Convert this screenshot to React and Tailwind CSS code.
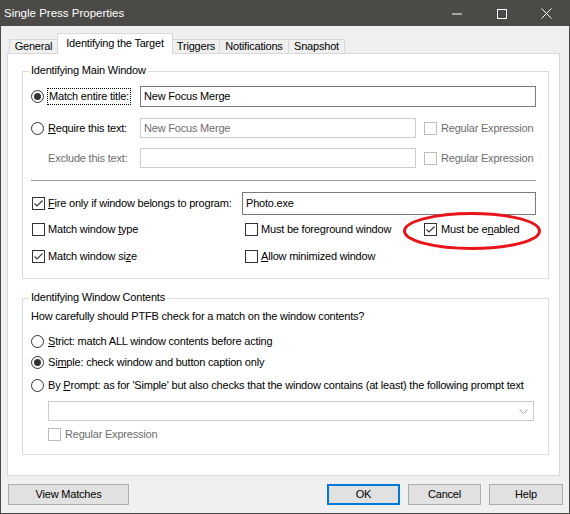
import React from "react";

function Radio({ checked }) {
  return (
    <svg width="13" height="13" viewBox="0 0 13 13" className="shrink-0">
      <circle cx="6.5" cy="6.5" r="6" fill="#fff" stroke="#333333" strokeWidth="1" />
      {checked && <circle cx="6.5" cy="6.5" r="3.5" fill="#333333" />}
    </svg>
  );
}

function Check({ checked, disabled }) {
  const c = disabled ? "#bcbcbc" : "#333333";
  return (
    <svg width="13" height="13" viewBox="0 0 13 13" className="shrink-0">
      <rect x="0.5" y="0.5" width="12" height="12" fill="#fff" stroke={c} strokeWidth="1" />
      {checked && (
        <polyline points="2.5,6.5 5,9 10.5,3.5" fill="none" stroke="#333333" strokeWidth="1.1" />
      )}
    </svg>
  );
}

function Btn({ children, w, primary }) {
  return (
    <div
      className={
        "h-[21px] flex items-center justify-center bg-[#e1e1e1] " +
        (primary ? "border-2 border-[#0078d7] " : "border border-[#adadad] ") +
        w
      }
    >
      {children}
    </div>
  );
}

export default function App() {
  return (
    <div className="relative w-[570px] h-[514px] bg-[#f0f0f0] border border-[#4b4a47] font-['Liberation_Sans',Arial,sans-serif] text-[11px] tracking-[-0.2px] text-black flex flex-col leading-none">
      {/* title bar */}
      <div className="h-[25px] bg-[#4b4a47] flex items-center text-white shrink-0">
        <div className="pl-[3px] text-[11.5px] tracking-normal">Single Press Properties</div>
        <div className="ml-auto flex h-full">
          <div className="w-[45px] h-full flex items-center justify-center">
            <svg width="10" height="10" viewBox="0 0 10 10">
              <line x1="0" y1="5" x2="10" y2="5" stroke="#fff" strokeWidth="1" />
            </svg>
          </div>
          <div className="w-[45px] h-full flex items-center justify-center">
            <svg width="10" height="10" viewBox="0 0 10 10">
              <rect x="0.5" y="0.5" width="9" height="9" fill="none" stroke="#fff" strokeWidth="1" />
            </svg>
          </div>
          <div className="w-[45px] h-full flex items-center justify-center">
            <svg width="11" height="11" viewBox="0 0 11 11">
              <line x1="0.5" y1="0.5" x2="10.5" y2="10.5" stroke="#fff" strokeWidth="1" />
              <line x1="10.5" y1="0.5" x2="0.5" y2="10.5" stroke="#fff" strokeWidth="1" />
            </svg>
          </div>
        </div>
      </div>

      {/* tabs */}
      <div className="mt-[7px] h-[20px] pl-[8px] flex items-end shrink-0">
        <div className="w-[48px] h-[14px] border-l border-t border-[#d9d9d9] flex items-center justify-center">General</div>
        <div className="relative z-10 w-[116px] h-[21px] -mb-px bg-white border-l border-t border-r border-[#d9d9d9] flex items-center justify-center pb-[1px]">
          Identifying the Target
        </div>
        <div className="w-[47px] h-[14px] border-t border-r border-[#d9d9d9] flex items-center justify-center">Triggers</div>
        <div className="w-[69px] h-[14px] border-t border-r border-[#d9d9d9] flex items-center justify-center">Notifications</div>
        <div className="w-[56px] h-[14px] border-t border-r border-[#d9d9d9] flex items-center justify-center">Snapshot</div>
      </div>

      {/* panel */}
      <div className="ml-[6px] w-[553px] h-[423px] bg-white border border-[#d9d9d9] shrink-0 flex flex-col">
        {/* group 1 */}
        <div className="relative ml-[14px] mt-[17px] w-[527px] h-[208px] border border-[#dcdcdc] flex flex-col shrink-0">
          <div className="absolute left-[6px] -top-[7px] bg-white px-[2px]">Identifying Main Window</div>

          {/* row 1 */}
          <div className="mt-[14px] h-[21px] flex items-center pl-[8px]">
            <div className="w-[109px] flex items-center">
              <Radio checked />
              <span className="ml-[3px] border border-dotted border-black px-[1px] py-[2px]">
                Match entire title:
              </span>
            </div>
            <div className="w-[396px] h-[21px] border border-[#7a7a7a] flex items-center pl-[3px]">New Focus Merge</div>
          </div>

          {/* row 2 */}
          <div className="mt-[11px] h-[20px] flex items-center pl-[8px]">
            <div className="w-[109px] flex items-center">
              <Radio />
              <span className="ml-[4px]">
                <span className="underline">R</span>equire this text:
              </span>
            </div>
            <div className="w-[276px] h-[20px] border border-[#cccccc] flex items-center pl-[3px] text-[#6d6d6d]">New Focus Merge</div>
            <div className="ml-[8px] flex items-center text-[#6d6d6d]">
              <Check disabled />
              <span className="ml-[4px]">Regular Expression</span>
            </div>
          </div>

          {/* row 3 */}
          <div className="mt-[10px] h-[20px] flex items-center pl-[8px]">
            <div className="w-[109px] pl-[17px] text-[#6d6d6d]">Exclude this text:</div>
            <div className="w-[276px] h-[20px] border border-[#cccccc]"></div>
            <div className="ml-[8px] flex items-center text-[#6d6d6d]">
              <Check disabled />
              <span className="ml-[4px]">Regular Expression</span>
            </div>
          </div>

          {/* separator */}
          <div className="mt-[12px] ml-[8px] w-[505px] h-px bg-[#a0a0a0]"></div>

          {/* row 4 */}
          <div className="mt-[11px] h-[23px] flex items-center pl-[9px]">
            <div className="w-[210px] flex items-center">
              <Check checked />
              <span className="ml-[3px]">
                <span className="underline">F</span>ire only if window belongs to program:
              </span>
            </div>
            <div className="w-[294px] h-[23px] border border-[#7a7a7a] flex items-center pl-[3px]">Photo.exe</div>
          </div>

          {/* row 5 */}
          <div className="mt-[4px] h-[20px] flex items-center pl-[9px]">
            <div className="w-[213px] flex items-center">
              <Check />
              <span className="ml-[3px]">
                Match window <span className="underline">t</span>ype
              </span>
            </div>
            <div className="w-[179px] flex items-center">
              <Check />
              <span className="ml-[3px]">
                Must be fore<span className="underline">g</span>round window
              </span>
            </div>
            <div className="flex items-center">
              <Check checked />
              <span className="ml-[4px]">
                Must be e<span className="underline">n</span>abled
              </span>
            </div>
          </div>

          {/* row 6 */}
          <div className="mt-[7px] h-[20px] flex items-center pl-[9px]">
            <div className="w-[213px] flex items-center">
              <Check checked />
              <span className="ml-[3px]">
                Match window si<span className="underline">z</span>e
              </span>
            </div>
            <div className="flex items-center">
              <Check />
              <span className="ml-[3px]">
                <span className="underline">A</span>llow minimized window
              </span>
            </div>
          </div>
        </div>

        {/* group 2 */}
        <div className="relative ml-[14px] mt-[19px] w-[527px] h-[157px] border border-[#dcdcdc] flex flex-col shrink-0">
          <div className="absolute left-[6px] -top-[7px] bg-white px-[2px]">Identifying Window Contents</div>

          <div className="mt-[9px] h-[16px] flex items-center pl-[8px]">
            How carefully should PTFB check for a match on the window contents?
          </div>

          <div className="mt-[9px] h-[16px] flex items-center pl-[8px]">
            <Radio />
            <span className="ml-[4px]">
              <span className="underline">S</span>trict: match ALL window contents before acting
            </span>
          </div>

          <div className="mt-[5px] h-[16px] flex items-center pl-[8px]">
            <Radio checked />
            <span className="ml-[4px]">
              Si<span className="underline">m</span>ple: check window and button caption only
            </span>
          </div>

          <div className="mt-[7px] h-[16px] flex items-center pl-[8px]">
            <Radio />
            <span className="ml-[4px]">
              By <span className="underline">P</span>rompt: as for 'Simple' but also checks that the window contains (at least) the following prompt text
            </span>
          </div>

          <div className="mt-[8px] ml-[25px] w-[486px] h-[20px] border border-[#cccccc] flex items-center justify-end pr-[5px]">
            <svg width="9" height="5" viewBox="0 0 9 5">
              <polyline points="0.5,0.5 4.5,4.5 8.5,0.5" fill="none" stroke="#a0a0a0" strokeWidth="1" />
            </svg>
          </div>

          <div className="mt-[5px] h-[16px] flex items-center pl-[25px] text-[#6d6d6d]">
            <Check disabled />
            <span className="ml-[4px]">Regular Expression</span>
          </div>
        </div>
      </div>

      {/* buttons */}
      <div className="mt-[8px] flex items-center pl-[7px] shrink-0">
        <Btn w="w-[121px]">View Matches</Btn>
        <div className="ml-auto flex gap-[8px] pr-[6px]">
          <Btn w="w-[73px]" primary>OK</Btn>
          <Btn w="w-[73px]">Cancel</Btn>
          <Btn w="w-[74px]">Help</Btn>
        </div>
      </div>

      {/* red annotation ellipse */}
      <svg className="absolute left-[401px] top-[210px] pointer-events-none" width="140" height="40" viewBox="0 0 140 40">
        <ellipse cx="70" cy="20" rx="67.5" ry="17.5" fill="none" stroke="#e8141c" strokeWidth="3" />
      </svg>
    </div>
  );
}
